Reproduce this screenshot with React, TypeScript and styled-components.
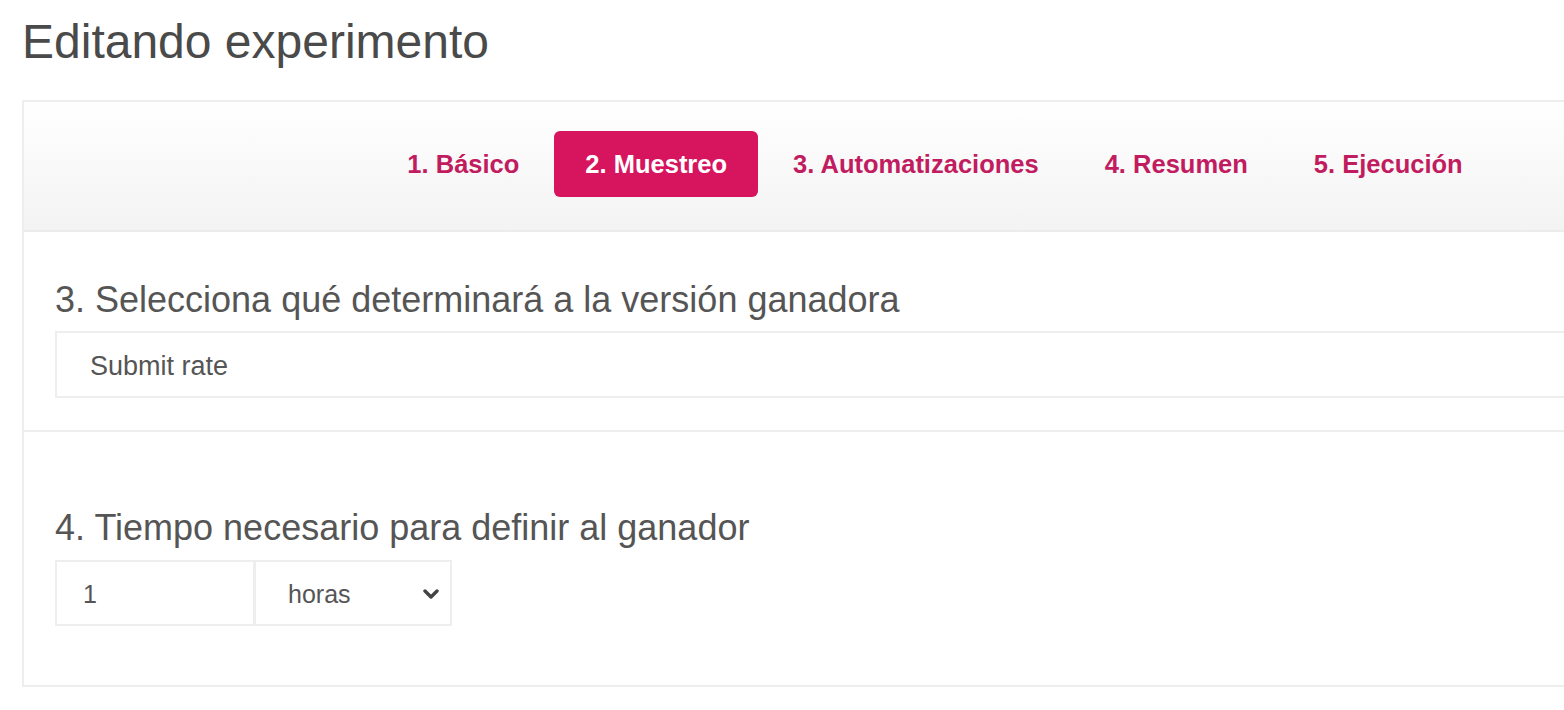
import React from 'react';
import styled, { createGlobalStyle } from 'styled-components';

const GlobalStyle = createGlobalStyle`
  html, body {
    margin: 0;
    padding: 0;
    overflow: hidden;
    background: #fff;
  }

  body {
    font-family: 'Liberation Sans', Arial, Helvetica, sans-serif;
    color: #555;
  }
`;

const Page = styled.div`
  width: 1564px;
  height: 710px;
  padding-left: 22px;
  box-sizing: border-box;
`;

const Title = styled.h1`
  margin: 15px 0 32px;
  font-size: 48px;
  line-height: 53px;
  font-weight: 400;
  color: #4a4a4a;
`;

const Panel = styled.div`
  width: 1822px;
  border: 2px solid #eeeeee;
  background: #fff;
`;

const Steps = styled.nav`
  display: flex;
  justify-content: center;
  align-items: center;
  gap: 4px;
  height: 130px;
  padding-bottom: 4px;
  box-sizing: border-box;
  background: linear-gradient(#ffffff, #f3f3f3);
  border-bottom: 2px solid #ececec;
`;

const Step = styled.a<{ active?: boolean }>`
  display: flex;
  align-items: center;
  height: 66px;
  padding: 0 31px;
  border-radius: 6px;
  font-size: 25.5px;
  font-weight: 700;
  text-decoration: none;
  color: ${(props) => (props.active ? '#fff' : '#c11c5f')};
  background: ${(props) => (props.active ? '#d7155f' : 'transparent')};
`;

const Section = styled.section<{ top: number; bottom: number; divider?: boolean }>`
  padding: ${(props) => props.top}px 31px ${(props) => props.bottom}px;
  border-bottom: ${(props) => (props.divider ? '2px solid #eeeeee' : 'none')};
`;

const Heading = styled.h3<{ gap: number }>`
  margin: 0 0 ${(props) => props.gap}px;
  font-size: 36px;
  line-height: 43px;
  font-weight: 400;
  color: #555;
`;

const Field = styled.div`
  display: flex;
  align-items: center;
  height: 67px;
  padding: 4px 0 0 33px;
  box-sizing: border-box;
  border: 2px solid #eeeeee;
  font-size: 27px;
  color: #555;
`;

const FieldGroup = styled.div`
  display: flex;
`;

const SmallField = styled.div<{ width: number; indent: number }>`
  display: flex;
  align-items: center;
  justify-content: space-between;
  width: ${(props) => props.width}px;
  height: 66px;
  padding: 2px 11px 0 ${(props) => props.indent}px;
  margin-right: -1px;
  box-sizing: border-box;
  border: 2px solid #eeeeee;
  font-size: 25px;
  color: #555;
`;

const Chevron = () => (
  <svg width="16" height="12" viewBox="0 0 16 12">
    <polyline
      points="2,3 8,9 14,3"
      fill="none"
      stroke="#444"
      strokeWidth="3.4"
      strokeLinecap="round"
      strokeLinejoin="round"
    />
  </svg>
);

const steps = ['1. Básico', '2. Muestreo', '3. Automatizaciones', '4. Resumen', '5. Ejecución'];

const App = () => (
  <Page>
    <GlobalStyle />
    <Title>Editando experimento</Title>
    <Panel>
      <Steps>
        {steps.map((s, i) => (
          <Step key={s} active={i === 1}>
            {s}
          </Step>
        ))}
      </Steps>
      <Section top={46} bottom={32} divider>
        <Heading gap={10}>3. Selecciona qué determinará a la versión ganadora</Heading>
        <Field>Submit rate</Field>
      </Section>
      <Section top={74} bottom={59}>
        <Heading gap={11}>4. Tiempo necesario para definir al ganador</Heading>
        <FieldGroup>
          <SmallField width={200} indent={26}>1</SmallField>
          <SmallField width={198} indent={32}>
            horas
            <Chevron />
          </SmallField>
        </FieldGroup>
      </Section>
    </Panel>
  </Page>
);

export default App;
